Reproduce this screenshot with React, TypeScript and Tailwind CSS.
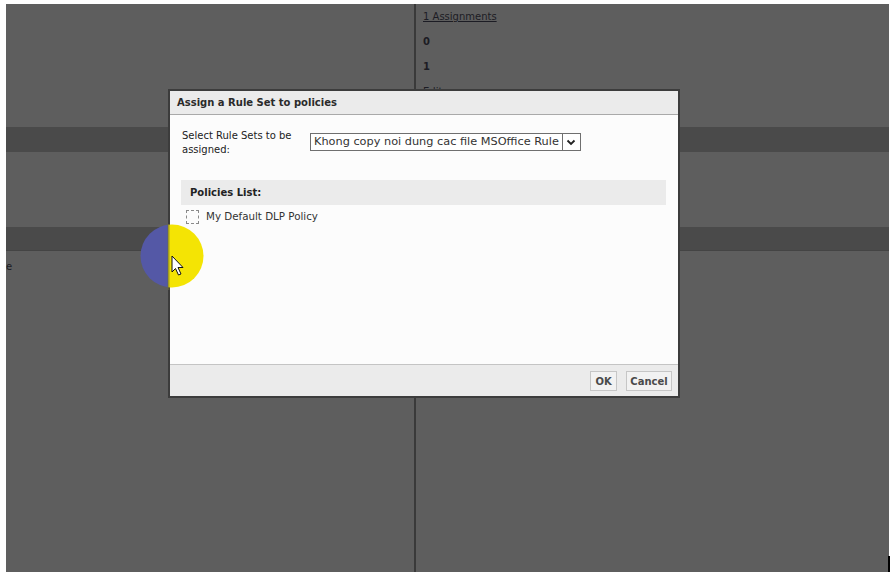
import React from 'react';

const font = "font-['DejaVu_Sans',Verdana,sans-serif]";

function PageColumn({ right }: { right?: boolean }) {
    return (
        <div className={`flex flex-col h-full ${right ? 'flex-1 border-l-2 border-[#3a3a3a]' : 'w-[408px]'}`}>
            <div className="h-[123px] px-[7px] pt-[6px] text-[10px] text-[#1c1c24]">
                {right && (
                    <div className="flex flex-col gap-[11px] leading-[14px]">
                        <span className="underline">1 Assignments</span>
                        <span className="font-bold">0</span>
                        <span className="font-bold">1</span>
                        <span>Edit</span>
                    </div>
                )}
            </div>
            <div className="h-[25px] bg-[#4a4a4a]" />
            <div className="h-[75px]" />
            <div className="h-[24px] bg-[#4a4a4a] border-b border-[#444]" />
            <div className="flex-1 pt-[8px] text-[10px] text-[#1c1c24]">
                {!right && <span className="block">e</span>}
            </div>
        </div>
    );
}

function Dialog() {
    return (
        <div className={`absolute left-[162px] top-[85px] w-[512px] h-[309px] border-2 border-[#3c3c3c] bg-[#fcfcfc] flex flex-col ${font}`}>
            <div className="h-[24px] bg-[#ebebeb] border-b border-[#a9a9a9] flex items-center px-[7px]">
                <span className="text-[10px] font-bold text-[#2a2a2a]">Assign a Rule Set to policies</span>
            </div>
            <div className="flex-1 px-[11px] pt-[14px] text-[#222]">
                <div className="flex items-start h-[28px]">
                    <div className="w-[129px] text-[10px] leading-[14px] pl-[1px]">
                        Select Rule Sets to be<br />assigned:
                    </div>
                    <div className="mt-[4px] flex items-center h-[18px] border border-[#6f6f6f] bg-white">
                        <span className="px-[3px] text-[11.3px] text-[#333] whitespace-nowrap">Khong copy noi dung cac file MSOffice Rule</span>
                        <span className="w-[18px] h-full border-l border-[#6f6f6f] flex items-center justify-center">
                            <svg width="10" height="7" viewBox="0 0 10 7">
                                <path d="M1.5 1.5 L5 5 L8.5 1.5" fill="none" stroke="#222" strokeWidth="1.8" />
                            </svg>
                        </span>
                    </div>
                </div>
                <div className="mt-[23px] mr-[1px] h-[25px] bg-[#ebebeb] flex items-center px-[9px]">
                    <span className="text-[10px] font-bold">Policies List:</span>
                </div>
                <div className="mt-[4px] flex items-center gap-[7px] pl-[5px]">
                    <span className="w-[13px] h-[14px] border border-dashed border-[#8a8a8a]" />
                    <span className="text-[10.3px] text-[#333]">My Default DLP Policy</span>
                </div>
            </div>
            <div className="h-[32px] bg-[#ebebeb] border-t border-[#c4c4c4] flex items-start justify-end gap-[9px] pr-[6px] pt-[6px]">
                <button className="h-[20px] w-[27px] border border-[#c6c6c6] bg-[#f2f2f2] text-[10px] font-bold text-[#4a4a4a]">OK</button>
                <button className="h-[20px] w-[46px] border border-[#c6c6c6] bg-[#f2f2f2] text-[10px] font-bold text-[#4a4a4a]">Cancel</button>
            </div>
        </div>
    );
}

function CursorHighlight() {
    return (
        <svg className="absolute left-[134px] top-[220px]" width="66" height="66" viewBox="0 0 66 66">
            <defs>
                <clipPath id="leftPart"><rect x="0" y="0" width="28" height="66" /></clipPath>
                <clipPath id="rightPart"><rect x="28" y="0" width="38" height="66" /></clipPath>
            </defs>
            <circle cx="32" cy="32" r="31.5" fill="#5458a6" clipPath="url(#leftPart)" />
            <circle cx="32" cy="32" r="31.5" fill="#f4e404" clipPath="url(#rightPart)" />
            <rect x="27.5" y="0" width="2" height="66" fill="#6b6b3a" opacity="0.6" />
            <path d="M32 32 L32 48 L35.5 44.5 L38.5 51 L41 50 L38 43.5 L43 43.5 Z" fill="#fff" stroke="#111" strokeWidth="1" strokeLinejoin="round" />
        </svg>
    );
}

export default function App() {
    return (
        <div className="w-[896px] h-[575px] bg-white pl-[6px] pt-[4px] overflow-hidden">
            <div className={`relative w-[883px] h-[568px] bg-[#5e5e5e] flex ${font}`}>
                <PageColumn />
                <PageColumn right />
                <Dialog />
                <CursorHighlight />
                <span className="absolute right-[-1px] bottom-0 w-[2px] h-[16px] bg-black" />
            </div>
        </div>
    );
}
